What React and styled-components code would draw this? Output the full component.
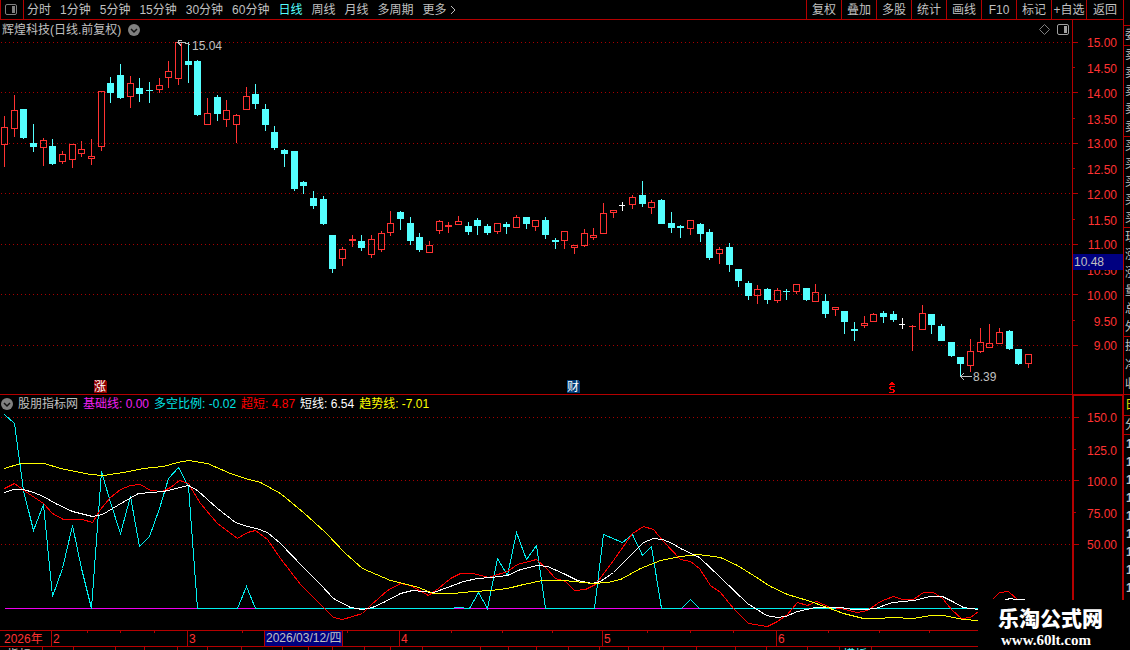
import React from 'react';
import styled, { createGlobalStyle } from 'styled-components';

const colors = {
  line: '#b40000',
  grid: '#a80000',
  axis: '#ff3232',
  up: '#ff3232',
  down: '#54ffff',
  text: '#c0c0c0',
  muted: '#808080',
  select: '#000080',
};

const periods = ['分时', '1分钟', '5分钟', '15分钟', '30分钟', '60分钟', '日线', '周线', '月线', '多周期'];
const tools = ['复权', '叠加', '多股', '统计', '画线', 'F10', '标记', '+自选', '返回'];

const priceLabels = ['15.00', '14.50', '14.00', '13.50', '13.00', '12.50', '12.00', '11.50', '11.00', '10.50', '10.00', '9.50', '9.00'];
const priceGrid = [42, 92, 143, 193, 244, 294, 345];
const priceHalf = [67, 118, 168, 219, 269, 320];

const valueLabels = ['150.0', '125.0', '100.0', '75.00', '50.00'];
const valueGrid = [417, 480, 544];
const valueHalf = [449, 512];

// kind (r rise, f fall, w flat), high, body top, body bottom, low
const candles = [
  ['r', 116, 127, 145, 167], ['r', 95, 110, 129, 137], ['f', 109, 109, 138, 139], ['f', 124, 143, 147, 152],
  ['r', 138, 140, 148, 166], ['f', 139, 146, 164, 165], ['r', 151, 154, 162, 164], ['r', 144, 144, 160, 168],
  ['r', 141, 149, 154, 157], ['r', 139, 156, 159, 165], ['r', 91, 91, 147, 151], ['f', 77, 83, 93, 103],
  ['f', 64, 75, 98, 99], ['r', 76, 83, 97, 108], ['f', 78, 88, 94, 102], ['f', 82, 90, 91, 103],
  ['r', 78, 85, 90, 93], ['r', 61, 71, 78, 88], ['r', 42, 42, 79, 85], ['f', 42, 61, 65, 83],
  ['f', 60, 61, 115, 116], ['r', 98, 113, 125, 125], ['f', 95, 97, 114, 121], ['r', 100, 110, 120, 127],
  ['r', 114, 115, 125, 143], ['r', 87, 96, 110, 110], ['f', 84, 94, 104, 109], ['f', 104, 109, 125, 131],
  ['f', 126, 132, 148, 150], ['f', 149, 150, 154, 167], ['f', 151, 151, 189, 191], ['f', 181, 182, 186, 194],
  ['f', 191, 198, 206, 209], ['f', 196, 199, 224, 225], ['f', 235, 235, 269, 273], ['r', 247, 249, 259, 266],
  ['r', 235, 239, 241, 247], ['f', 235, 241, 248, 251], ['r', 235, 239, 255, 258], ['r', 231, 233, 250, 252],
  ['r', 211, 223, 233, 236], ['f', 211, 212, 219, 230], ['f', 217, 223, 241, 245], ['f', 233, 237, 250, 252],
  ['r', 241, 245, 253, 253], ['r', 220, 221, 231, 234], ['r', 222, 225, 227, 233], ['r', 216, 221, 225, 225],
  ['f', 222, 226, 232, 235], ['f', 218, 220, 226, 235], ['f', 224, 226, 233, 235], ['r', 223, 223, 232, 234],
  ['f', 222, 224, 227, 234], ['r', 215, 217, 228, 228], ['f', 217, 217, 224, 229], ['r', 220, 220, 227, 231],
  ['f', 217, 220, 235, 239], ['f', 238, 240, 242, 249], ['r', 231, 231, 241, 249], ['r', 245, 245, 248, 254],
  ['r', 229, 233, 246, 247], ['r', 228, 235, 238, 240], ['r', 203, 213, 234, 234], ['r', 210, 210, 213, 218],
  ['w', 202, 205, 206, 211], ['r', 195, 197, 205, 209], ['f', 181, 195, 204, 207], ['r', 200, 202, 208, 214],
  ['f', 199, 200, 224, 224], ['f', 212, 223, 228, 233], ['f', 225, 226, 228, 238], ['r', 220, 220, 229, 235],
  ['f', 223, 224, 234, 242], ['f', 229, 232, 258, 260], ['r', 247, 249, 254, 264], ['f', 243, 247, 265, 272],
  ['f', 269, 269, 281, 287], ['f', 281, 283, 296, 300], ['r', 285, 289, 296, 304], ['f', 288, 289, 300, 304],
  ['r', 288, 290, 301, 303], ['f', 289, 291, 292, 300], ['r', 284, 284, 292, 294], ['f', 288, 288, 300, 301],
  ['r', 284, 292, 302, 302], ['f', 294, 301, 314, 318], ['r', 307, 307, 310, 316], ['f', 311, 311, 322, 334],
  ['f', 322, 329, 331, 341], ['r', 316, 323, 326, 328], ['r', 313, 314, 322, 322], ['f', 311, 313, 317, 323],
  ['f', 311, 314, 320, 322], ['w', 318, 324, 325, 329], ['r', 325, 326, 327, 351], ['r', 305, 313, 330, 330],
  ['f', 314, 314, 325, 334], ['f', 324, 326, 341, 341], ['f', 342, 342, 356, 357], ['f', 357, 357, 364, 376],
  ['r', 339, 351, 366, 372], ['r', 328, 342, 352, 353], ['r', 324, 343, 348, 348], ['r', 328, 332, 344, 344],
  ['f', 330, 331, 349, 350], ['f', 349, 349, 364, 365], ['r', 354, 354, 364, 368],
];

const series = {
  ratio:
    '4,414 14,423 23,490 33,530 43,504 52,596 62,568 72,525 81,568 91,608 101,471 110,502 120,533 130,496 139,546 149,536 159,508 168,478 178,467 188,486 197,608 237,608 246,586 255,608 453,608 454,607 463,607 464,608 469,608 478,592 487,608 497,558 507,575 516,532 526,559 536,545 545,608 594,608 603,534 622,542 632,534 642,555 651,546 661,608 681,608 690,599 699,608 1028,608',
  fast:
    '4,488 14,483 25,491 43,503 52,513 63,519 82,519 92,522 100,509 110,497 120,489 130,485 140,484 150,490 162,491 170,487 179,480 188,483 200,503 217,523 237,538 247,532 255,530 267,539 280,558 300,584 310,594 323,607 333,617 342,619 352,616 362,613 370,605 387,590 400,583 410,585 428,595 438,588 450,578 460,573 473,573 488,577 507,571 517,564 536,559 547,569 555,578 565,581 574,590 585,589 595,584 613,560 632,533 643,526 653,529 663,541 680,559 690,561 699,568 710,585 720,592 733,608 748,623 767,626 777,621 787,614 797,602 807,605 816,601 830,607 840,608 857,612 867,610 880,601 893,596 902,599 913,599 923,592 933,592 942,598 952,610 961,618 970,617 978,611 992,599 999,592 1008,591 1017,599 1028,607',
  short:
    '4,492 13,489 23,489 33,492 43,496 55,503 72,511 92,516 102,514 117,505 138,493 163,491 188,485 197,490 217,508 235,522 247,526 256,528 267,532 280,543 303,567 320,584 333,598 350,607 362,609 372,607 383,602 400,593 412,590 433,592 447,587 463,581 477,578 490,577 507,575 520,569 537,565 547,566 563,573 577,580 592,583 600,581 613,572 633,552 643,542 653,538 662,539 672,543 680,548 699,557 720,577 747,603 766,615 777,617 785,616 797,611 815,607 840,607 853,609 865,609 875,608 892,602 913,600 930,596 942,596 952,601 963,607 978,609 992,606 1006,599 1010,598 1015,599 1024,599',
  trend:
    '4,468 20,463 44,463 60,468 90,474 103,475 123,472 143,468 163,466 177,462 188,460 207,463 230,473 245,478 260,482 280,493 303,512 325,532 345,553 362,568 390,580 403,583 418,587 433,593 453,593 473,591 490,590 507,588 523,584 542,580 563,580 583,582 592,583 607,582 620,579 640,568 660,560 680,556 698,554 720,557 737,565 753,575 770,586 787,594 807,600 827,607 843,613 863,618 878,618 892,617 913,618 930,615 943,615 963,619 978,620 1028,622',
};

const legend = [
  ['基础线: 0.00', '#f020f0'],
  ['多空比例: -0.02', '#00e4e4'],
  ['超短: 4.87', '#ff0000'],
  ['短线: 6.54', '#ffffff'],
  ['趋势线: -7.01', '#ffff00'],
];

const quoteGroups = [
  ['委'],
  ['卖', '卖', '卖', '卖', '卖'],
  ['买', '买', '买', '买', '买'],
  ['现', '涨', '涨', '量', '总', '外'],
  ['换', '净', '收'],
];

const tabWidths = [43, 31, 42, 29, 33, 30, 34, 41, 26, 24, 32, 26, 32, 58, 28, 28, 32, 31, 29, 35, 33, 39, 31, 41, 32, 32, 251];

const GlobalStyle = createGlobalStyle`
  body {
    margin: 0;
    background: #000;
  }
  * {
    box-sizing: border-box;
  }
`;

const Page = styled.div`
  position: relative;
  display: flex;
  background: #000;
  color: ${colors.text};
  font-family: "Liberation Sans", "Noto Sans CJK SC", sans-serif;
  font-size: 12px;
  line-height: 14px;
  overflow: hidden;
`;

const Content = styled.main`
  flex: 1;
  min-width: 0;
`;

const Toolbar = styled.nav`
  display: flex;
  height: 20px;
  border-left: 1px solid ${colors.line};
  border-bottom: 1px solid ${colors.line};
`;

const BareButton = styled.button`
  padding: 0;
  border: 0;
  background: none;
  color: inherit;
  font: inherit;
  white-space: nowrap;
  cursor: pointer;
`;

const LayoutButton = styled(BareButton)`
  display: flex;
  align-items: center;
  justify-content: center;
  width: 23px;
  padding-right: 2px;
  border-right: 1px solid ${colors.line};
`;

const Periods = styled.div`
  display: flex;
  flex: 1;
  gap: 9px;
  padding-left: 3px;
`;

const PeriodButton = styled(BareButton)`
  display: flex;
  align-items: center;
  gap: 3px;
  color: ${({ $active }) => ($active ? colors.down : colors.text)};
`;

const Tools = styled.div`
  display: flex;
`;

const ToolButton = styled(BareButton)`
  width: 35px;
  border-left: 1px solid ${colors.line};

  &:last-child {
    width: 37px;
  }
`;

const Panel = styled.section`
  display: flex;
  border-bottom: ${({ $last }) => ($last ? 0 : 1)}px solid ${colors.line};
`;

const Plot = styled.div`
  flex: 1;
  min-width: 0;
`;

const PanelHead = styled.header`
  display: flex;
  align-items: center;
  gap: 7px;
  height: 20px;
  padding: 0 3px 1px 2px;
  white-space: nowrap;
`;

const IndicatorHead = styled(PanelHead)`
  gap: 5px;
  height: 18px;
  padding-left: 1px;
`;

const Title = styled.h1`
  margin: 0;
  font: inherit;
`;

const HeadIcons = styled.div`
  display: flex;
  align-items: center;
  gap: 7px;
  margin-left: auto;
`;

const IconButton = styled(BareButton)`
  display: flex;
`;

const LegendItem = styled.span`
  color: ${({ $color }) => $color};
`;

const Drawing = styled.svg`
  display: block;
  width: 100%;
  height: ${({ $height }) => $height}px;
  shape-rendering: crispEdges;
  font-size: 12px;
`;

const Axis = styled.aside`
  position: relative;
  display: flex;
  width: 51px;
  border-left: 1px solid ${colors.line};
  color: ${colors.axis};
`;

const ValueAxis = styled(Axis)`
  border-left-width: 2px;
  border-top: 1px solid ${colors.line};
  border-right: 1px solid ${colors.line};
`;

const Ticks = styled.svg`
  width: 5px;
  height: ${({ $height }) => $height}px;
  shape-rendering: crispEdges;
`;

const Labels = styled.ol`
  flex: 1;
  display: flex;
  flex-direction: column;
  justify-content: space-between;
  margin: 0;
  padding: ${({ $top }) => $top}px ${({ $right }) => $right}px ${({ $bottom }) => $bottom}px 0;
  list-style: none;
  text-align: right;

  li:nth-child(even) {
    padding-top: 2px;
  }
`;

const PriceBadge = styled.output`
  position: absolute;
  top: 234px;
  left: 0;
  right: 0;
  height: 16px;
  padding-left: 1px;
  background: ${colors.select};
  color: ${colors.text};
  line-height: 16px;
`;

const TimeAxis = styled.div`
  position: relative;
  display: grid;
  grid-template-columns: 51fr 136fr 212fr 203fr 174fr 203fr 144fr;
  height: 17px;
  border-top: 1px solid ${colors.line};
  border-bottom: 1px solid ${colors.line};
  color: ${colors.axis};
  line-height: 16px;
`;

const Year = styled.span`
  padding-left: 4px;
  white-space: nowrap;
`;

const Month = styled.div`
  display: grid;
  grid-template-columns: repeat(4, 1fr);
  padding-left: 1px;
  border-left: 1px solid ${colors.line};
`;

const MonthTick = styled.i`
  height: 2px;
  border-left: 1px solid ${colors.line};
`;

const DateBadge = styled.time`
  position: absolute;
  top: 0;
  left: calc(100% * 264 / 1123);
  width: 79px;
  height: 15px;
  padding-left: 1px;
  border-left: 1px solid ${colors.line};
  border-right: 1px solid ${colors.line};
  background: ${colors.select};
  color: ${colors.text};
  line-height: 15px;
  white-space: nowrap;
`;

const TabStrip = styled.div`
  display: grid;
  grid-template-columns: ${tabWidths.map((w) => `${w}fr`).join(' ')};
  height: 3px;
  line-height: 16px;
  overflow: hidden;
`;

const Tab = styled.span`
  padding-left: ${({ $active }) => ($active ? 3 : 7)}px;
  border-right: 1px solid ${colors.line};
  color: ${({ $active }) => ($active ? colors.down : colors.text)};
  white-space: nowrap;
`;

const QuoteStrip = styled.aside`
  width: 7px;
  height: 650px;
  padding-top: 25px;
  border-left: 1px solid ${colors.line};
  overflow: hidden;
`;

const QuoteGroup = styled.div`
  display: flex;
  flex-direction: column;
  padding-left: 1px;
  border-top: 1px solid ${colors.line};
  line-height: ${({ $row }) => $row}px;
  color: ${({ $color }) => $color || colors.text};
`;

const Trade = styled.span`
  height: 18px;
  padding-left: 1px;
  font-weight: bold;
`;

const Watermark = styled.footer`
  position: absolute;
  right: 0;
  bottom: 0;
  display: flex;
  flex-direction: column;
  gap: 3px;
  width: 152px;
  height: 50px;
  padding: 4px 0 0 20px;
  background: #000;
  color: #fff;
  font-weight: bold;
`;

const SiteName = styled.strong`
  font-family: "Noto Sans CJK SC", sans-serif;
  font-size: 21px;
  line-height: 26px;
`;

const SiteLink = styled.a`
  padding-left: 3px;
  color: inherit;
  font-family: "Liberation Serif", serif;
  font-size: 15px;
  line-height: 15px;
  text-decoration: none;
`;

const SplitIcon = ({ color = colors.muted }) => (
  <svg width="12" height="12" viewBox="0 0 12 12" aria-hidden="true">
    <rect x="0.5" y="0.5" width="11" height="10" rx="1.5" fill="none" stroke={color} />
    <rect x="7" y="2" width="3" height="7" fill={color} />
  </svg>
);

const DropIcon = () => (
  <svg width="12" height="12" viewBox="0 0 12 12" aria-hidden="true">
    <circle cx="6" cy="6" r="6" fill={colors.muted} />
    <path d="M3 5 L6 8 L9 5" fill="none" stroke="#111" strokeWidth="1.5" />
  </svg>
);

const Candle = ({ index, data }) => {
  const [kind, high, top, bottom, low] = data;
  const x = Math.round(4 + index * 9.66);
  const color = { r: colors.up, f: colors.down, w: '#fff' }[kind];
  const hollow = kind === 'r' && bottom - top > 2;
  return (
    <g fill={color}>
      {top > high && <rect x={x} y={high} width="1" height={top - high} />}
      {low > bottom && <rect x={x} y={bottom} width="1" height={low - bottom} />}
      {hollow ? (
        <path fillRule="evenodd" d={`M${x - 3} ${top}h7v${bottom - top}h-7z M${x - 2} ${top + 1}h5v${bottom - top - 2}h-5z`} />
      ) : (
        <rect x={x - 3} y={top} width={kind === 'w' ? 6 : 7} height={bottom - top} />
      )}
    </g>
  );
};

const GridLines = ({ rows }) =>
  rows.map((y) => (
    <path key={y} d={`M1 ${y + 0.5}H1072`} stroke={colors.grid} strokeDasharray="1 3" />
  ));

const AxisTicks = ({ top, height, major, minor }) => (
  <Ticks $height={height} viewBox={`0 ${top} 5 ${height}`} fill={colors.line} aria-hidden="true">
    {major.map((y) => <rect key={y} x="0" y={y} width="5" height="1" />)}
    {minor.map((y) => <rect key={y} x="0" y={y} width="2" height="1" />)}
  </Ticks>
);

const PriceChart = () => (
  <Drawing $height={354} viewBox="0 40 1072 354" preserveAspectRatio="none" role="img" aria-label="日线">
    <GridLines rows={priceGrid} />
    {candles.map((data, i) => <Candle key={i} index={i} data={data} />)}
    <g fill="none" stroke={colors.text}>
      <path d="M179 42.5H184L190 44.5 M182 40.5H179L178 42.5L181 45.5" />
      <path d="M961 376.5H972 M964 373L960.5 376.5L964 380" />
    </g>
    <g fill={colors.text}>
      <text x="192" y="50">15.04</text>
      <text x="973" y="381">8.39</text>
    </g>
    <path d="M94 380H105L107 382V393H94Z" fill="#900000" />
    <text x="94" y="391" fill="#fff">涨</text>
    <path d="M567 380H578L580 382V393H567Z" fill="#003c78" />
    <text x="567" y="391" fill="#fff">财</text>
    {/* dividend marker */}
    <path
      d="M891 382.5H893 M890 383.5H894 M889 384.5H895 M890 386.5H895 M889 387.5H891 M889 388.5H891 M890 389.5H894 M893 390.5H895 M893 391.5H895 M889 392.5H894"
      fill="none"
      stroke="#f00"
    />
  </Drawing>
);

const IndicatorChart = () => (
  <Drawing $height={217} viewBox="0 413 1072 217" preserveAspectRatio="none" role="img" aria-label="股朋指标网">
    <GridLines rows={valueGrid} />
    <g fill="none" transform="translate(0.5 0.5)">
      <path d="M4 608H1028" stroke="#f000f0" />
      <polyline points={series.ratio} stroke="#00f0f0" />
      <polyline points={series.fast} stroke="#ff0000" />
      <polyline points={series.short} stroke="#ffffff" />
      <polyline points={series.trend} stroke="#ffff00" />
    </g>
  </Drawing>
);

const App = () => {
  const [period, setPeriod] = React.useState('日线');
  return (
    <Page>
      <GlobalStyle />
      <Content>
        <Toolbar>
          <LayoutButton aria-label="布局">
            <SplitIcon />
          </LayoutButton>
          <Periods>
            {periods.map((name) => (
              <PeriodButton key={name} $active={name === period} onClick={() => setPeriod(name)}>
                {name}
              </PeriodButton>
            ))}
            <PeriodButton>
              更多
              <svg width="7" height="10" viewBox="0 0 7 10" aria-hidden="true">
                <path d="M1 1L5 5L1 9" fill="none" stroke={colors.text} />
              </svg>
            </PeriodButton>
          </Periods>
          <Tools>
            {tools.map((name) => <ToolButton key={name}>{name}</ToolButton>)}
          </Tools>
        </Toolbar>

        <Panel>
          <Plot>
            <PanelHead>
              <Title>辉煌科技(日线.前复权)</Title>
              <IconButton aria-label="股票菜单"><DropIcon /></IconButton>
              <HeadIcons>
                <IconButton aria-label="标识">
                  <svg width="11" height="11" viewBox="0 0 11 11" aria-hidden="true">
                    <path d="M5.5 0.5L10.5 5.5L5.5 10.5L0.5 5.5Z" fill="none" stroke={colors.muted} />
                  </svg>
                </IconButton>
                <IconButton aria-label="侧栏"><SplitIcon color="#a0a0a0" /></IconButton>
              </HeadIcons>
            </PanelHead>
            <PriceChart />
          </Plot>
          <Axis>
            <AxisTicks top={20} height={374} major={priceGrid} minor={priceHalf} />
            <Labels $top={16} $bottom={41} $right={6}>
              {priceLabels.map((label) => <li key={label}>{label}</li>)}
            </Labels>
            <PriceBadge>10.48</PriceBadge>
          </Axis>
        </Panel>

        <Panel $last>
          <Plot>
            <IndicatorHead>
              <IconButton aria-label="指标菜单"><DropIcon /></IconButton>
              <span>股朋指标网</span>
              {legend.map(([text, color]) => (
                <LegendItem key={text} $color={color}>{text}</LegendItem>
              ))}
            </IndicatorHead>
            <IndicatorChart />
          </Plot>
          <ValueAxis>
            <AxisTicks top={396} height={234} major={valueGrid} minor={valueHalf} />
            <Labels $top={15} $bottom={78} $right={5}>
              {valueLabels.map((label) => <li key={label}>{label}</li>)}
            </Labels>
          </ValueAxis>
        </Panel>

        <TimeAxis>
          <Year>2026年</Year>
          {[2, 3, 4, 5, 6].map((month) => (
            <Month key={month}>
              <span>{month}</span>
              <MonthTick />
              <MonthTick />
              <MonthTick />
            </Month>
          ))}
          <DateBadge dateTime="2026-03-12">2026/03/12/四</DateBadge>
        </TimeAxis>
        <TabStrip>
          {tabWidths.map((_, i) => (
            <Tab key={i} $active={i === 25}>
              {i === 0 && '指标'}
              {i === 25 && '模板'}
            </Tab>
          ))}
        </TabStrip>
      </Content>

      <QuoteStrip>
        {quoteGroups.map((rows, i) => (
          <QuoteGroup key={i} $row={rows.length === 1 || rows.length === 3 ? 19 : 18}>
            {rows.map((label, n) => <span key={n}>{label}</span>)}
          </QuoteGroup>
        ))}
        <QuoteGroup $row={20} $color="#e0e000">日</QuoteGroup>
        <QuoteGroup $row={18}>分</QuoteGroup>
        <QuoteGroup $row={18}>
          {Array.from({ length: 9 }, (_, n) => <Trade key={n}>1</Trade>)}
        </QuoteGroup>
      </QuoteStrip>

      <Watermark>
        <SiteName>乐淘公式网</SiteName>
        <SiteLink href="#home">www.60lt.com</SiteLink>
      </Watermark>
    </Page>
  );
};

export default App;
